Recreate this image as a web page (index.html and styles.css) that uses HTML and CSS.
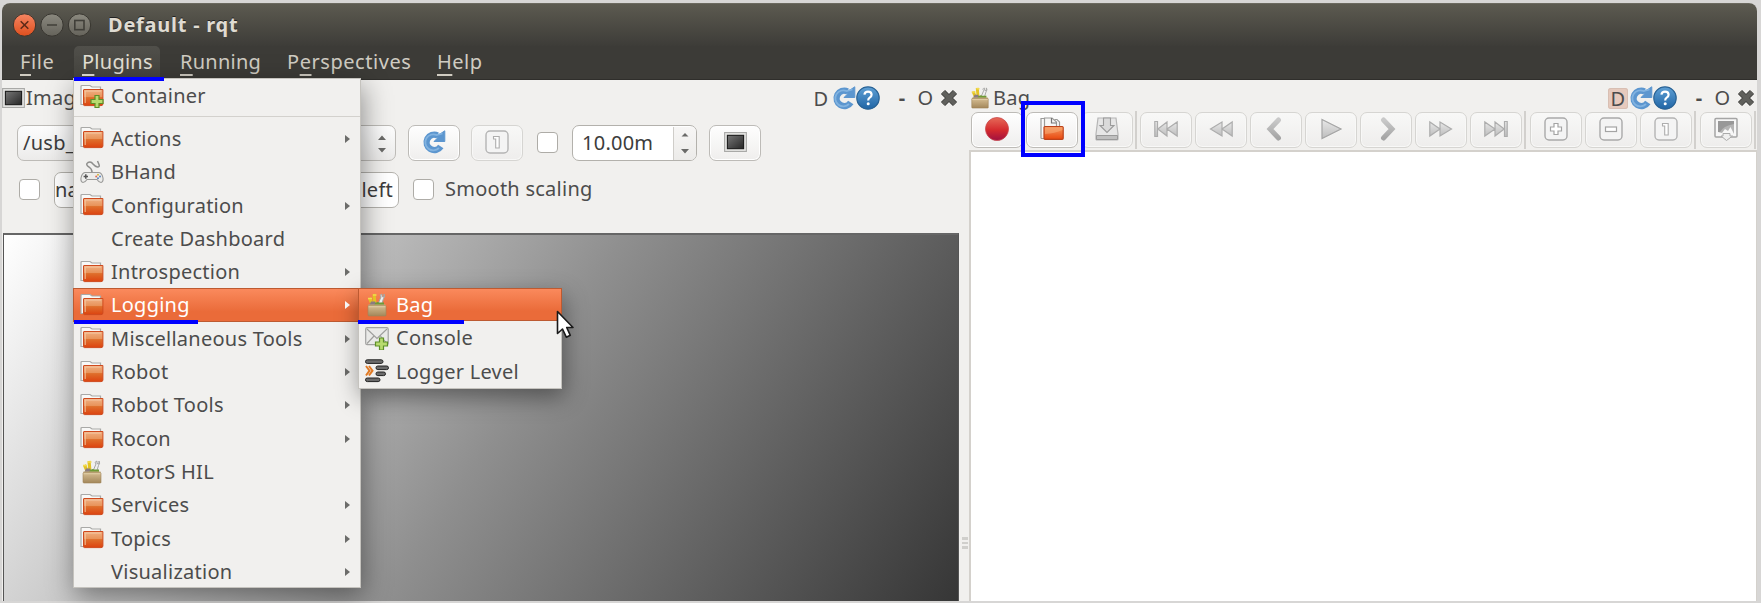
FILE: index.html
```html
<!DOCTYPE html>
<html lang="en">
<head>
<meta charset="utf-8">
<title>Default - rqt</title>
<link rel="stylesheet" href="styles.css">
</head>
<body>
<svg class="defs" width="0" height="0" aria-hidden="true">
  <defs>
    <linearGradient id="gFold" x1="0" y1="0" x2="0" y2="1"><stop offset="0" stop-color="#f0b184"/><stop offset=".45" stop-color="#e8935a"/><stop offset=".5" stop-color="#df6f2c"/><stop offset="1" stop-color="#dc4310"/></linearGradient>
    <linearGradient id="gOpen" x1="0" y1="0" x2="0" y2="1"><stop offset="0" stop-color="#f59a60"/><stop offset="1" stop-color="#e8480f"/></linearGradient>
    <linearGradient id="gBox" x1="0" y1="0" x2="0" y2="1"><stop offset="0" stop-color="#d3bb90"/><stop offset="1" stop-color="#a3875a"/></linearGradient>
    <linearGradient id="gBlue" x1="0" y1="0" x2="0" y2="1"><stop offset="0" stop-color="#5fa0d5"/><stop offset="1" stop-color="#2065a5"/></linearGradient>
    <linearGradient id="gRed" x1="0" y1="0" x2="0" y2="1"><stop offset="0" stop-color="#e66a58"/><stop offset=".55" stop-color="#d42a2e"/><stop offset="1" stop-color="#a01040"/></linearGradient>
    <linearGradient id="gGray" x1="0" y1="0" x2="0" y2="1"><stop offset="0" stop-color="#e8e8e8"/><stop offset="1" stop-color="#bdbdbd"/></linearGradient>
    <linearGradient id="gChev" x1="0" y1="0" x2="0" y2="1"><stop offset="0" stop-color="#c9c9c9"/><stop offset="1" stop-color="#a5a5a5"/></linearGradient>
    <linearGradient id="gScr" x1="0" y1="0" x2="1" y2="1"><stop offset="0" stop-color="#777"/><stop offset="1" stop-color="#262626"/></linearGradient>
  </defs>
  <symbol id="folder" viewBox="0 0 24 24">
    <path d="M1 20.500V2.500Q1 1.500 2 1.500H10L12 3H20.500V20.500Z" fill="#f8f8f7" stroke="#a9a9a7" stroke-width="1.200"/>
    <path d="M4 5.500H22.900V20Q22.900 21.600 21 21.600H4.500Q3.500 21.600 3.500 20.600V6Q3.500 5.500 4 5.500Z" fill="url(#gFold)" stroke="#cf4a1e" stroke-width="1"/>
    <path d="M5.200 19V7H21" fill="none" stroke="#f6caa6" stroke-width=".9"/>
  </symbol>
  <symbol id="folderplus" viewBox="0 0 24 24">
    <use href="#folder"/>
    <path d="M15 11.500h4v4h4v4h-4v4h-4v-4h-4v-4h4z" fill="#b8db6e" stroke="#5d8f28" stroke-width="1.200"/>
  </symbol>
  <symbol id="pad" viewBox="0 0 24 24">
    <path d="M12 12Q12 9 9 7Q5 4.500 8 2.500Q11 1 13 4Q15 6.500 17.500 7Q20 7 19 4.500L17.500 1" fill="none" stroke="#8e8e8c" stroke-width="1.500"/>
    <path d="M5 12.500H19Q22 13 23 18Q23.500 22 21 22.500Q19 22.500 17 19.500H7Q5 22.500 3 22.500Q.5 22 1 18Q2 13 5 12.500Z" fill="#ededeb" stroke="#9a9a98" stroke-width="1.100"/>
    <path d="M5.800 14.300v4.400M3.600 16.500h4.400" stroke="#555" stroke-width="1.500"/>
    <circle cx="18" cy="14.700" r="1" fill="#d9b640"/><circle cx="18" cy="18.200" r="1" fill="#5d86c0"/><circle cx="16.200" cy="16.500" r="1" fill="#e06c52"/><circle cx="20" cy="16.500" r="1" fill="#5d86c0"/>
  </symbol>
  <symbol id="bag" viewBox="0 0 24 24">
    <path d="M4.500 5l3 7M9 1l1 11" stroke="#e3c324" stroke-width="3.200"/>
    <path d="M3 5.500h4M8 2h3.500" stroke="#f2dc50" stroke-width="1.600"/>
    <path d="M13 11L16 4Q14 1.500 17 1.200V3.500L19 4V1Q20.500 3 18.500 5.500L16.500 12" fill="#eee" stroke="#a5a5a3" stroke-width="1"/>
    <path d="M4 13L6 8.500H10L12 12Z" fill="#8a7c80"/><path d="M9 12Q11 8 14.500 9.500L19 9.500V13H9Z" fill="#6e9a36"/>
    <path d="M3.500 11.500H20.500L21 13H3Z" fill="#c2a97c"/>
    <path d="M3 13H21V22.500Q21 23 20 23H4Q3 23 3 22Z" fill="url(#gBox)" stroke="#9d8357" stroke-width=".6"/>
    <path d="M3.500 13.700H20.500" stroke="#e2cfa8" stroke-width="1"/>
  </symbol>
  <symbol id="mail" viewBox="0 0 24 24">
    <rect x=".7" y="1.700" width="22.500" height="17" rx="1.500" fill="#e9e9e7" stroke="#a2a2a0" stroke-width="1.200"/>
    <path d="M2 17.500L9.500 9.500M22 17.500L15 9.500M2 3L12 12.500L22 3" fill="none" stroke="#9d9d9b" stroke-width="1.100"/>
    <path d="M14.500 12h4v4h4v4h-4v4h-4v-4h-4v-4h4z" fill="#b8db6e" stroke="#5d8f28" stroke-width="1.200"/>
  </symbol>
  <symbol id="levels" viewBox="0 0 24 24">
    <rect x=".5" y=".8" width="17.500" height="3.600" rx="1.800" fill="#6b6b6b" stroke="#222" stroke-width="1"/>
    <rect x="11" y="7" width="12.500" height="3.600" rx="1.800" fill="#6b6b6b" stroke="#222" stroke-width="1"/>
    <rect x="11" y="13" width="9.500" height="3.600" rx="1.800" fill="#6b6b6b" stroke="#222" stroke-width="1"/>
    <rect x=".5" y="19" width="14.500" height="3.600" rx="1.800" fill="#6b6b6b" stroke="#222" stroke-width="1"/>
    <path d="M1 7L4.500 11.700L1 16.500M4 7L7.500 11.700L4 16.500" fill="none" stroke="#e07a25" stroke-width="2"/>
  </symbol>
  <symbol id="refresh" viewBox="0 0 24 24">
    <path d="M18.800 16.500A7.700 7.700 0 1 1 15.500 5.300" fill="none" stroke="#5c96cf" stroke-width="6.400"/>
    <path d="M13.500 6.500L18 4L22.800 .8V11.500H12L15.500 8Z" fill="#5c96cf" stroke="#5c96cf" stroke-width="1" stroke-linejoin="round"/>
    <path d="M17 18A8 8 0 1 1 14.500 5L20.500 3.500" fill="none" stroke="#82b3e0" stroke-width="1.800"/>
  </symbol>
  <symbol id="help" viewBox="0 0 24 24">
    <circle cx="12" cy="12" r="11.200" fill="url(#gBlue)" stroke="#2a6395" stroke-width="1.200"/>
    <path d="M8.400 8.700Q8.800 5.600 12 5.600Q15.600 5.600 15.600 8.800Q15.600 10.500 13.700 11.600Q12.200 12.500 12.200 14.600" fill="none" stroke="#fff" stroke-width="2.200"/>
    <circle cx="12.200" cy="17.800" r="1.500" fill="#fff"/>
  </symbol>
  <symbol id="close" viewBox="0 0 24 24">
    <path d="M4 4L20 20M20 4L4 20" stroke="#454542" stroke-width="8"/>
    <path d="M4 4L20 20M20 4L4 20" stroke="#60605c" stroke-width="5.500"/>
  </symbol>
  <symbol id="screen" viewBox="0 0 24 21">
    <rect x=".6" y=".6" width="22.800" height="19.800" fill="#e9e9e7" stroke="#a9a9a7" stroke-width="1.200"/>
    <rect x="3.500" y="3.500" width="17" height="14" fill="url(#gScr)" stroke="#1d1d1d" stroke-width="1.200"/>
  </symbol>
  <symbol id="one" viewBox="0 0 24 24">
    <rect x="1" y="1" width="22" height="22" rx="4" fill="#f4f4f4" stroke="#b4b4b4" stroke-width="1.400"/>
    <path d="M8.500 9V6.500H14.200V18H10.700V9Z" fill="#fff" stroke="#adadad" stroke-width="1.100"/>
  </symbol>
  <symbol id="plus" viewBox="0 0 24 24">
    <rect x="1" y="1" width="22" height="22" rx="4" fill="#f4f4f4" stroke="#a9a9a9" stroke-width="1.400"/>
    <path d="M10 6.500h4v3.500h3.500v4h-3.500v3.500h-4v-3.500h-3.500v-4h3.500z" fill="#fff" stroke="#a4a4a4" stroke-width="1.200"/>
  </symbol>
  <symbol id="minus" viewBox="0 0 24 24">
    <rect x="1" y="1" width="22" height="22" rx="4" fill="#f4f4f4" stroke="#a9a9a9" stroke-width="1.400"/>
    <rect x="6.500" y="10" width="11" height="4.500" fill="#fff" stroke="#a4a4a4" stroke-width="1.200"/>
  </symbol>
  <symbol id="record" viewBox="0 0 24 24"><circle cx="12" cy="12" r="11.500" fill="url(#gRed)" stroke="#c9494c" stroke-width=".8"/></symbol>
  <symbol id="open" viewBox="0 0 24 24">
    <path d="M1 21.500V1.500H7V4M19.500 11V5L17 2.500H14.500" fill="#fafafa" stroke="#9b9b99" stroke-width="1.200"/>
    <path d="M4.500 11V1H12L16.500 5V11Z" fill="#f7f7f6" stroke="#9b9b99" stroke-width="1.200"/>
    <path d="M11.500 1V6H16.500" fill="none" stroke="#777" stroke-width="1.200"/>
    <path d="M1 21.500H5" stroke="#9b9b99" stroke-width="1.200"/>
    <rect x="4" y="9.500" width="19.200" height="12.800" rx="1" fill="url(#gOpen)" stroke="#bc421a" stroke-width="1.200"/>
    <path d="M5 17Q15 16.500 22.500 13V10.500H5Z" fill="#f8ab77" opacity=".55"/>
  </symbol>
  <symbol id="save" viewBox="0 0 24 24">
    <path d="M3 1H21L23 17V22Q23 23 22 23H2Q1 23 1 22V17Z" fill="#e6e6e6" stroke="#b5b5b5" stroke-width="1.200"/>
    <path d="M1.500 18.500H22.500V22.500H1.500Z" fill="#bfbfbf" stroke="#9a9a9a" stroke-width="1"/>
    <path d="M8.500 1H15.500V8.500H19L12 15.500L5 8.500H8.500Z" fill="#dadada" stroke="#9b9b9b" stroke-width="1.100"/>
  </symbol>
  <symbol id="first" viewBox="0 0 24 18">
    <path d="M.8 1.500H3.500V16.500H.8ZM13 2V16L3.800 9ZM23.200 2V16L13 9Z" fill="url(#gGray)" stroke="#adadad" stroke-width="1.200"/>
  </symbol>
  <symbol id="rew" viewBox="0 0 24 18"><path d="M13 2V16L1.500 9ZM23.200 2V16L13 9Z" fill="url(#gGray)" stroke="#adadad" stroke-width="1.200"/></symbol>
  <symbol id="prev" viewBox="0 0 24 24"><path d="M14.500 3L6 12L14.500 21" fill="none" stroke="url(#gChev)" stroke-width="5" stroke-linecap="round"/></symbol>
  <symbol id="play" viewBox="0 0 24 24"><path d="M3 2.500L22 12L3 21.500Z" fill="url(#gGray)" stroke="#a4a4a4" stroke-width="1.200"/></symbol>
  <symbol id="monitor" viewBox="0 0 24 24">
    <rect x="1" y="1.500" width="22" height="18.500" rx="1" fill="#f7f7f7" stroke="#a5a5a5" stroke-width="1.500"/>
    <path d="M4 4H20V17L16.500 10L14 14L11 12L8 16L4 15Z" fill="#b4b4b4"/><path d="M4 4H20V7Q9 9 6 15L4 15Z" fill="#989898"/>
    <path d="M9 16.500H16V19H18.500L12.500 23.500L7 19H9Z" fill="#efefef" stroke="#aaa" stroke-width="1"/>
  </symbol>
</svg>

<div class="window">
  <header class="titlebar">
    <svg class="winbtns" viewBox="0 0 82 26" width="82" height="26">
      <defs><linearGradient id="wb" x1="0" y1="0" x2="0" y2="1"><stop offset="0" stop-color="#8b897f"/><stop offset="1" stop-color="#65635b"/></linearGradient>
      <linearGradient id="wr" x1="0" y1="0" x2="0" y2="1"><stop offset="0" stop-color="#f58562"/><stop offset="1" stop-color="#df4f1d"/></linearGradient></defs>
      <circle cx="14.500" cy="13" r="11.200" fill="url(#wr)" stroke="#37352f" stroke-width="1"/>
      <circle cx="42" cy="13" r="11.200" fill="url(#wb)" stroke="#37352f" stroke-width="1"/>
      <circle cx="69.500" cy="13" r="11.200" fill="url(#wb)" stroke="#37352f" stroke-width="1"/>
      <path d="M10.700 9.200L18.300 16.800M18.300 9.200L10.700 16.800" stroke="#5e2a18" stroke-width="1.600"/>
      <path d="M37 13H47" stroke="#403f39" stroke-width="1.600"/>
      <rect x="64.800" y="8.500" width="9.200" height="9.200" fill="none" stroke="#403f39" stroke-width="1.600"/>
    </svg>
    <span class="title">Default - rqt</span>
  </header>
  <nav class="menubar">
    <span class="mb file"><u>F</u>ile</span>
    <span class="mb plugins"><u>P</u>lugins</span>
    <span class="mb running"><u>R</u>unning</span>
    <span class="mb persp">P<u>e</u>rspectives</span>
    <span class="mb help"><u>H</u>elp</span>
  </nav>
  <main class="panes">
    <section class="left">
      <div class="dockhead">
        <svg class="i-screen"><use href="#screen"/></svg><span class="name">Imag</span>
        <div class="dockbtns">
          <span class="d">D</span><svg class="i24"><use href="#refresh"/></svg><svg class="i24"><use href="#help"/></svg>
          <span class="dash">-</span><span class="o">O</span><svg class="i-close"><use href="#close"/></svg>
        </div>
      </div>
      <div class="row row1">
        <div class="combo"><span>/usb_</span><svg width="10" height="20" viewBox="0 0 10 20"><path d="M1 7L5 2.500L9 7ZM1 15L5 19.500L9 15Z" fill="#6a6a68"/></svg></div>
        <div class="btn r"><svg class="i24"><use href="#refresh"/></svg></div>
        <div class="btn dis one"><svg class="i24"><use href="#one"/></svg></div>
        <div class="check c1"></div>
        <div class="spin"><span>10.00m</span><div class="arrows"><svg width="8" height="22" viewBox="0 0 8 22"><path d="M.5 4.500L4 1L7.500 4.500ZM0 17L4 21.500L8 17Z" fill="#6a6a68"/></svg></div></div>
        <div class="btn scr"><svg class="i-screen"><use href="#screen"/></svg></div>
      </div>
      <div class="row row2">
        <div class="check"></div>
        <div class="field"><span>na</span><span>left</span></div>
        <div class="check c3"></div>
        <span class="smooth">Smooth scaling</span>
      </div>
      <div class="image"></div>
    </section>
    <div class="splitter"><i></i><i></i><i></i></div>
    <section class="right">
      <div class="dockhead">
        <svg class="i-bag"><use href="#bag"/></svg><span class="name bagname">Bag</span>
        <div class="dockbtns">
          <span class="d on">D</span><svg class="i24"><use href="#refresh"/></svg><svg class="i24"><use href="#help"/></svg>
          <span class="dash">-</span><span class="o">O</span><svg class="i-close"><use href="#close"/></svg>
        </div>
      </div>
      <div class="toolbar">
        <div class="group"><div class="btn"><svg class="i24"><use href="#record"/></svg></div><div class="btn"><svg class="i24"><use href="#open"/></svg></div><div class="btn dis"><svg class="i24"><use href="#save"/></svg></div></div>
        <div class="sep"></div>
        <div class="group"><div class="btn dis"><svg class="i24"><use href="#first"/></svg></div><div class="btn dis"><svg class="i24"><use href="#rew"/></svg></div><div class="btn dis"><svg class="i24"><use href="#prev"/></svg></div><div class="btn dis"><svg class="i24"><use href="#play"/></svg></div><div class="btn dis"><svg class="i24 flip"><use href="#prev"/></svg></div><div class="btn dis"><svg class="i24 flip"><use href="#rew"/></svg></div><div class="btn dis"><svg class="i24 flip"><use href="#first"/></svg></div></div>
        <div class="sep wide"></div>
        <div class="group"><div class="btn dis"><svg class="i24"><use href="#plus"/></svg></div><div class="btn dis"><svg class="i24"><use href="#minus"/></svg></div><div class="btn dis"><svg class="i24"><use href="#one"/></svg></div></div>
        <div class="sep wide"></div>
        <div class="group"><div class="btn dis"><svg class="i24"><use href="#monitor"/></svg></div></div>
        <div class="sep last"></div>
      </div>
      <div class="canvas"></div>
    </section>
  </main>
</div>

<div class="menu main-menu">
  <div class="item first"><svg class="i24"><use href="#folderplus"/></svg><span>Container</span></div>
  <div class="rule"></div>
  <div class="item sub"><svg class="i24"><use href="#folder"/></svg><span>Actions</span></div>
  <div class="item"><svg class="i24"><use href="#pad"/></svg><span>BHand</span></div>
  <div class="item sub"><svg class="i24"><use href="#folder"/></svg><span>Configuration</span></div>
  <div class="item"><svg class="i24"></svg><span>Create Dashboard</span></div>
  <div class="item sub"><svg class="i24"><use href="#folder"/></svg><span>Introspection</span></div>
  <div class="item sub hot"><svg class="i24"><use href="#folder"/></svg><span>Logging</span></div>
  <div class="item sub"><svg class="i24"><use href="#folder"/></svg><span>Miscellaneous Tools</span></div>
  <div class="item sub"><svg class="i24"><use href="#folder"/></svg><span>Robot</span></div>
  <div class="item sub"><svg class="i24"><use href="#folder"/></svg><span>Robot Tools</span></div>
  <div class="item sub"><svg class="i24"><use href="#folder"/></svg><span>Rocon</span></div>
  <div class="item"><svg class="i24"><use href="#bag"/></svg><span>RotorS HIL</span></div>
  <div class="item sub"><svg class="i24"><use href="#folder"/></svg><span>Services</span></div>
  <div class="item sub"><svg class="i24"><use href="#folder"/></svg><span>Topics</span></div>
  <div class="item sub"><svg class="i24"></svg><span>Visualization</span></div>
</div>
<div class="menu sub-menu">
  <div class="item hot"><svg class="i24"><use href="#bag"/></svg><span>Bag</span></div>
  <div class="item"><svg class="i24"><use href="#mail"/></svg><span>Console</span></div>
  <div class="item"><svg class="i24"><use href="#levels"/></svg><span>Logger Level</span></div>
</div>
<div class="mark m1"></div><div class="mark m2"></div><div class="mark m3"></div><div class="markbox"></div>
<svg class="cursor" viewBox="0 0 20 30" width="20" height="30"><path d="M1.500 1.500V23.500L6.500 19L10.300 27.200L14.300 25.300L10.700 17.500H17Z" fill="#fff" stroke="#1a1a1a" stroke-width="1.600" stroke-linejoin="round"/></svg>
</body>
</html>
```

FILE: styles.css
```css
* { box-sizing: border-box; }
html, body { margin: 0; width: 1761px; height: 603px; overflow: hidden; }
body { background: #d7d6d5; font-family: "Noto Sans", "Open Sans", sans-serif; font-size: 20px; line-height: 24px; letter-spacing: .25px; color: #4c4c4c; padding: 3px 4px 2px 2px; position: relative; white-space: nowrap; }
svg { display: block; flex: none; }
.defs { position: absolute; }
.window { height: 598px; display: flex; flex-direction: column; background: #f1f0ee; border-radius: 8px 8px 0 0; overflow: hidden; }
.titlebar { height: 43px; flex: none; display: flex; align-items: center; padding: 0 0 1px 8px; background: linear-gradient(#5c5a50, #3d3c38); border-top: 1px solid #6b695f; }
.title { font-weight: 700; color: #dfdbd2; margin-left: 16px; letter-spacing: .75px; text-shadow: 0 -1px 0 #222; }
.menubar { height: 34px; flex: none; display: flex; background: #3c3b37; border-bottom: 1px solid #2f2e2b; color: #d0ccc2; padding-left: 10px; }
.mb { padding: 4px 8px 0; height: 33px; }
.mb u { text-decoration-thickness: 1.500px; text-underline-offset: 5px; text-decoration-skip-ink: none; }
.file { width: 62px; letter-spacing: .6px; }
.plugins { width: 86px; background: linear-gradient(#504f4a, #45443f); border-radius: 5px 5px 0 0; color: #e4e0d6; }
.running { margin-left: 12px; width: 96px; }
.persp { margin-left: 11px; width: 138px; letter-spacing: .55px; }
.mb.help { margin-left: 12px; letter-spacing: .5px; }
.panes { flex: 1; display: flex; min-height: 0; }
.left { width: 958px; display: flex; flex-direction: column; }
.dockhead { height: 32px; flex: none; display: flex; align-items: center; padding-top: 4px; }
.i24 { width: 24px; height: 24px; }
.i-screen { width: 23px; height: 20px; }
.i-bag { width: 22px; height: 24px; }
.i-close { width: 18px; height: 18px; margin: 0 2px 0 6px; }
.name { margin-left: 1px; }
.bagname { margin-left: 2px; }
.dockbtns { margin-left: auto; display: flex; align-items: center; }
.d { width: 20px; height: 21px; line-height: 21px; text-align: center; margin-right: 1px; border-radius: 3px; }
.d.on { background: #e6cabd; box-shadow: inset 0 0 0 1px #d8bfb3; }
.dash { margin-left: 17px; width: 10px; text-align: center; font-weight: 700; }
.o { margin-left: 10px; width: 17px; text-align: center; }
.row { display: flex; align-items: center; height: 36px; flex: none; }
.row1 { margin-top: 13px; padding-left: 15px; }
.row2 { margin-top: 11px; padding-left: 17px; }
.btn { width: 52px; height: 36px; display: flex; align-items: center; justify-content: center; border: 1.500px solid #bdbbb7; border-radius: 7px; background: linear-gradient(#fefefe, #efeeed); box-shadow: inset 0 0 0 1px #fff; padding-bottom: 2px; }
.btn.dis { border-color: #d6d5d2; background: linear-gradient(#f8f8f7, #eeedec); box-shadow: inset 0 0 0 1px #f8f8f7; }
.combo { width: 379px; height: 36px; border: 1.500px solid #bdbbb7; border-radius: 7px; background: linear-gradient(#fdfdfd, #ecebea); display: flex; align-items: center; justify-content: space-between; padding: 0 8px 0 5px; color: #3c3c3c; }
.r { margin-left: 12px; }
.one { margin-left: 11px; }
.check { width: 21px; height: 21px; border: 1.500px solid #aeaca7; border-radius: 4px; background: #fff; }
.row1 .check { margin-bottom: 2px; }
.row2 .check { margin-bottom: 1px; }
.c1 { margin-left: 14px; }
.spin { margin-left: 14px; width: 125px; height: 36px; border: 1.500px solid #b3b1ac; border-radius: 7px; background: #fff; display: flex; justify-content: space-between; align-items: center; padding-left: 9px; color: #3c3c3c; overflow: hidden; }
.arrows { width: 23px; height: 33px; border-left: 1px solid #cfcdc9; background: linear-gradient(#f7f6f5, #ecebe9); display: flex; align-items: center; justify-content: center; }
.scr { margin-left: 12px; }
.field { margin-left: 14px; width: 345px; height: 36px; border: 1.500px solid #b3b1ac; border-radius: 7px; background: #fff; display: flex; justify-content: space-between; align-items: center; padding: 0 5px 0 0; color: #3c3c3c; }
.c3 { margin-left: 14px; }
.smooth { margin: 0 0 2px 11px; }
.image { flex: 1; margin: 25px 1px 0 1px; border: 1px solid #555; border-top: 2px solid #666; border-bottom: 0; background: linear-gradient(123.500deg, #fff 0%, #8f8f8f 52%, #363636 100%); }
.splitter { width: 9px; display: flex; flex-direction: column; gap: 2px; padding: 457px 0 0 2px; }
.splitter i { height: 2.500px; width: 6px; background: #d0cfcc; }
.right { flex: 1; display: flex; flex-direction: column; }
.toolbar { display: flex; height: 38px; padding-top: 0; padding-left: 2px; }
.group { display: flex; gap: 3px; }
.sep { width: 2px; height: 38px; background: #d2d0cd; margin: -1px 3px 0 2px; }
.sep.wide { margin-right: 4px; }
.sep.last { margin-right: 0; }
.canvas { flex: 1; background: #fff; border: 2px solid #d4d1cc; border-bottom: 0; border-right-width: 1px; }
.flip { transform: scaleX(-1); }
.menu { position: absolute; background: #f1f0ee; border: 1px solid #c5c3be; }
.main-menu { left: 73px; top: 78px; width: 288px; height: 510px; box-shadow: 2px 8px 26px rgba(0,0,0,.42); }
.sub-menu { left: 358px; top: 288px; width: 204px; height: 100.500px; box-shadow: 2px 8px 22px rgba(0,0,0,.42); }
.item { height: 33.333px; display: flex; align-items: center; padding: 1px 10px 0 6px; gap: 7px; }
.item svg { margin-top: -1px; }
.item.first { height: 33px; padding-top: 0; }
.item.first svg { margin-top: 0; }
.rule { height: 1px; background: #d3d1cd; margin: 4px 0 4.700px; }
.item.sub::after { content: ""; margin-left: auto; border-left: 5px solid #6c6c6a; border-top: 4.500px solid transparent; border-bottom: 4.500px solid transparent; }
.item.hot { background: linear-gradient(#fb8b5e, #ea6b39 70%); box-shadow: inset 0 0 0 1px #bd5a31; color: #fff; margin: 0 -1px; padding: 1px 11px 0 7px; }
.item.sub.hot::after { border-left-color: #fff; }
.sub-menu .item:first-child { margin-top: -1px; }
.mark { position: absolute; height: 4px; background: #00f; }
.m1 { left: 74px; top: 77px; width: 90px; }
.m2 { left: 74px; top: 320px; width: 124px; }
.m3 { left: 358px; top: 320px; width: 106px; }
.markbox { position: absolute; left: 1021px; top: 101px; width: 64px; height: 56px; border: 4px solid #00f; }
.cursor { position: absolute; left: 556px; top: 310px; }
```
